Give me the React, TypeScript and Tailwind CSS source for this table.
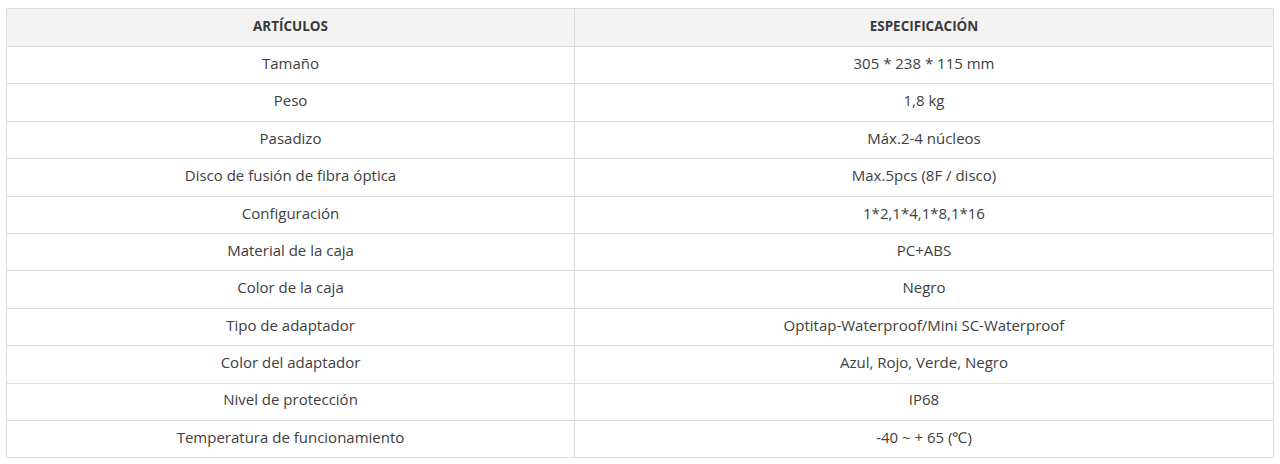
const rows: [string, string][] = [
  ["Tamaño", "305 * 238 * 115 mm"],
  ["Peso", "1,8 kg"],
  ["Pasadizo", "Máx.2-4 núcleos"],
  ["Disco de fusión de fibra óptica", "Max.5pcs (8F / disco)"],
  ["Configuración", "1*2,1*4,1*8,1*16"],
  ["Material de la caja", "PC+ABS"],
  ["Color de la caja", "Negro"],
  ["Tipo de adaptador", "Optitap-Waterproof/Mini SC-Waterproof"],
  ["Color del adaptador", "Azul, Rojo, Verde, Negro"],
  ["Nivel de protección", "IP68"],
  ["Temperatura de funcionamiento", "-40 ~ + 65 (℃)"],
];

export default function App() {
  return (
    <div className="bg-white pt-2 pl-[6px] pr-[6px] font-['Open_Sans',sans-serif]">
      <table className="w-full border-collapse border border-[#dddddd] text-[15px] text-[#404040]">
        <thead>
          <tr className="bg-[#f3f3f3] h-[38px]">
            <th className="w-[568px] border border-[#dddddd] pb-[2px] text-[13.5px] font-bold text-[#3a3a3a]">ARTÍCULOS</th>
            <th className="border border-[#dddddd] pb-[2px] text-[13.5px] font-bold text-[#3a3a3a]">ESPECIFICACIÓN</th>
          </tr>
        </thead>
        <tbody>
          {rows.map(([k, v]) => (
            <tr key={k} className="h-[37.4px]">
              <td className="border border-[#dddddd] pb-[4px] text-center">{k}</td>
              <td className="border border-[#dddddd] pb-[4px] text-center">{v}</td>
            </tr>
          ))}
        </tbody>
      </table>
    </div>
  );
}
